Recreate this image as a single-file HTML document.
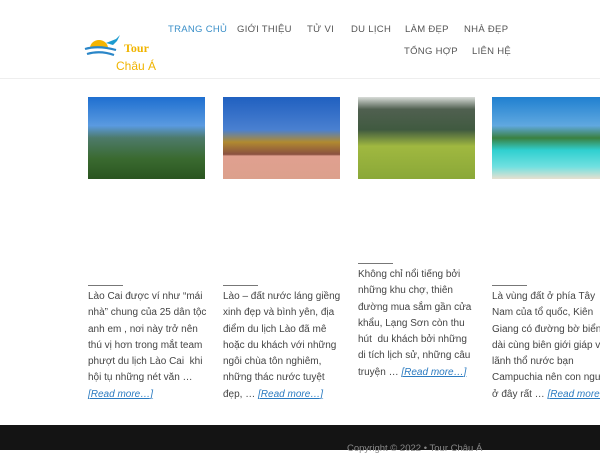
<!DOCTYPE html>
<html><head><meta charset="utf-8"><style>
*{margin:0;padding:0;box-sizing:border-box}
body{width:600px;height:450px;overflow:hidden;background:#fff;font-family:"Liberation Sans","DejaVu Sans",sans-serif;position:relative}
.hdr{position:absolute;left:0;top:0;width:600px;height:79px;border-bottom:1px solid #eee}
.nav{position:absolute;font-size:9.5px;color:#555;letter-spacing:.3px;white-space:nowrap}
.img{position:absolute;top:97px;height:82px}
.rule{position:absolute;width:35px;border-top:1px solid #777}
.txt{position:absolute;font-size:10px;line-height:16.3px;color:#444;white-space:nowrap}
.txt a{color:#2a7ac0;font-style:italic;text-decoration:underline}
.foot{position:absolute;left:0;top:425px;width:600px;height:25px;background:#141414}
</style></head><body>
<div class="hdr">
<svg style="position:absolute;left:84px;top:34px" width="38" height="26" viewBox="0 0 38 26">
<path d="M6 14 A9 8 0 0 1 24 14 Z" fill="#f5b400"/>
<path d="M1 15 Q14 11 32 16" stroke="#2a86c8" stroke-width="2.2" fill="none"/>
<path d="M3 20 Q16 16 30 21" stroke="#2a86c8" stroke-width="2.2" fill="none"/>
<path d="M22 9 L32 5 L36 1 L33 7 L29 11 Z" fill="#1d9bd0"/>
</svg>
<div style="position:absolute;left:124px;top:41px;font:bold 12px 'Liberation Serif',serif;color:#f0b400">Tour</div>
<div style="position:absolute;left:116px;top:59px;font-size:12px;color:#f0b400">Châu Á</div>
<div class="nav" style="left:168px;top:24px;color:#3a8fc8">TRANG CHỦ</div>
<div class="nav" style="left:237px;top:24px">GIỚI THIỆU</div>
<div class="nav" style="left:307px;top:24px">TỬ VI</div>
<div class="nav" style="left:351px;top:24px">DU LỊCH</div>
<div class="nav" style="left:405px;top:24px">LÀM ĐẸP</div>
<div class="nav" style="left:464px;top:24px">NHÀ ĐẸP</div>
<div class="nav" style="left:404px;top:46px">TỔNG HỢP</div>
<div class="nav" style="left:472px;top:46px">LIÊN HỆ</div>
</div>
<div class="img" style="left:88px;width:117px;background:linear-gradient(#1f6fd0 0%,#5a9ae0 35%,#4d7a6a 50%,#3a6a30 75%,#2a5520 100%)"></div>
<div class="img" style="left:223px;width:117px;background:linear-gradient(#2060c0 0%,#4a80d0 40%,#b08a30 55%,#8a5040 70%,#e0a090 72%,#dca08c 100%)"></div>
<div class="img" style="left:358px;width:117px;background:linear-gradient(#d8dcd8 0%,#506050 15%,#405a40 40%,#a0b840 60%,#8aa838 100%)"></div>
<div class="img" style="left:492px;width:108px;background:linear-gradient(#2080d0 0%,#60a8e0 35%,#3a8040 50%,#30d0d0 65%,#70e0e0 85%,#e8e0d0 100%)"></div>
<div class="rule" style="left:88px;top:285px"></div>
<div class="txt" style="left:88px;top:289px">Lào Cai được ví như “mái<br>nhà” chung của 25 dân tộc<br>anh em , nơi này trở nên<br>thú vị hơn trong mắt team<br>phượt du lịch Lào Cai &nbsp;khi<br>hội tụ những nét văn …<br><a>[Read more…]</a></div>
<div class="rule" style="left:223px;top:285px"></div>
<div class="txt" style="left:223px;top:289px">Lào – đất nước láng giềng<br>xinh đẹp và bình yên, địa<br>điểm du lịch Lào đã mê<br>hoặc du khách với những<br>ngôi chùa tôn nghiêm,<br>những thác nước tuyệt<br>đẹp, … <a>[Read more…]</a></div>
<div class="rule" style="left:358px;top:263px"></div>
<div class="txt" style="left:358px;top:267px">Không chỉ nổi tiếng bởi<br>những khu chợ, thiên<br>đường mua sắm gần cửa<br>khẩu, Lạng Sơn còn thu<br>hút &nbsp;du khách bởi những<br>di tích lịch sử, những câu<br>truyện … <a>[Read more…]</a></div>
<div class="rule" style="left:492px;top:285px"></div>
<div class="txt" style="left:492px;top:289px">Là vùng đất ở phía Tây<br>Nam của tổ quốc, Kiên<br>Giang có đường bờ biển<br>dài cùng biên giới giáp với<br>lãnh thổ nước bạn<br>Campuchia nên con người<br>ở đây rất … <a>[Read more…]</a></div>
<div class="foot"><div style="position:absolute;left:347px;top:18px;font-size:9.5px;color:#888;white-space:nowrap">Copyright © 2022 • Tour Châu Á</div></div>
</body></html>
